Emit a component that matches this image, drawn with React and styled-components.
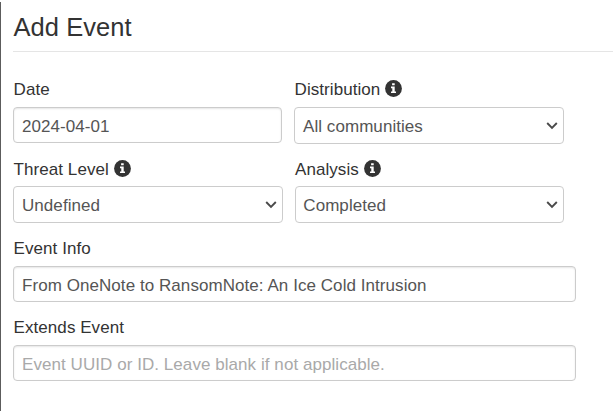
import React from "react";
import styled, { createGlobalStyle } from "styled-components";

const Global = createGlobalStyle`
  * { box-sizing: border-box; }
  body { margin: 0; background: #fff; overflow: hidden; }
`;
const Page = styled.main`
  width: 613px; height: 409px; margin-top: 2px; padding-left: 12px;
  border-left: 1px solid #5c5c5c;
  background: #fff; color: #333;
  font: 17px/20px "Liberation Sans", Arial, sans-serif;
  letter-spacing: 0.06px;
`;
const Title = styled.h1`
  margin: 0; height: 50px; padding: 10px 0 0 0.5px;
  border-bottom: 1px solid #e5e5e5;
  font-size: 25.5px; line-height: 30px; font-weight: 400;
`;
const Form = styled.form`
  display: grid; grid-template-columns: 270px 270px;
  grid-template-rows: 79px 80px 79px 79px;
  column-gap: 11px; padding-top: 27px;
`;
const Field = styled.div`
  grid-column: ${(p) => (p.$wide ? "1 / -1" : "auto")};
  width: ${(p) => p.$width || 270}px;
  margin-left: ${(p) => p.$indent || 0}px;
`;
const Label = styled.label`
  display: flex; align-items: center; gap: 5px; height: 20px;
  margin: ${(p) => (p.$lowered ? "1px 0 7px" : "0 0 8px")};
  padding: 2px 0 0 ${(p) => (p.$flush ? 0 : 0.6)}px;
`;
const Control = styled.div`
  display: flex; align-items: center; justify-content: space-between;
  height: ${(p) => (p.$inset ? 36 : 37)}px;
  padding: ${(p) => (p.$inset ? 3 : 2)}px 5px 0 ${(p) => (p.$flush ? 7.3 : 8)}px;
  border: 1px solid #ccc; border-radius: 4px;
  color: ${(p) => (p.$muted ? "#a9a9a9" : "#555")};
  box-shadow: ${(p) => (p.$inset ? "inset 0 1px 2px rgba(0,0,0,.1)" : "none")};
`;
const InfoIcon = styled.svg`
  display: block; margin-bottom: 3px;
`;
const ChevronIcon = styled.svg`
  display: block; margin-bottom: 1px;
`;
const Info = () => (
  <InfoIcon width="17" height="17" viewBox="0 0 17 17">
    <circle cx="8.5" cy="8.5" r="8.4" fill="#333" />
    <path fill="#fff" d="M7.100 3.200h2.600v2.100H7.100zM6 6.500h3.700v4.900H11v1.700H6v-1.700h1.300V8.200H6z" />
  </InfoIcon>
);
const Chevron = () => (
  <ChevronIcon width="12" height="12" viewBox="0 0 12 12" fill="none" stroke="#4a4a4a" strokeWidth="1.9">
    <path d="M1.200 3 6 7.800 10.800 3" />
  </ChevronIcon>
);
const Choice = ({ label, value, $lowered, $flush, ...size }) => (
  <Field {...size}>
    <Label $lowered={$lowered} $flush={$flush}>{label}<Info /></Label>
    <Control $flush={$flush}>{value}<Chevron /></Control>
  </Field>
);

export default function App() {
  return (
    <Page>
      <Global />
      <Title>Add Event</Title>
      <Form>
        <Field $width={269}><Label>Date</Label><Control $inset>2024-04-01</Control></Field>
        <Choice label="Distribution" value="All communities" />
        <Choice label="Threat Level" value="Undefined" $lowered />
        <Choice label="Analysis" value="Completed" $width={269} $indent={1} $lowered $flush />
        <Field $wide $width={563}><Label>Event Info</Label><Control $inset>From OneNote to RansomNote: An Ice Cold Intrusion</Control></Field>
        <Field $wide $width={563}><Label>Extends Event</Label><Control $inset $muted>Event UUID or ID. Leave blank if not applicable.</Control></Field>
      </Form>
    </Page>
  );
}
